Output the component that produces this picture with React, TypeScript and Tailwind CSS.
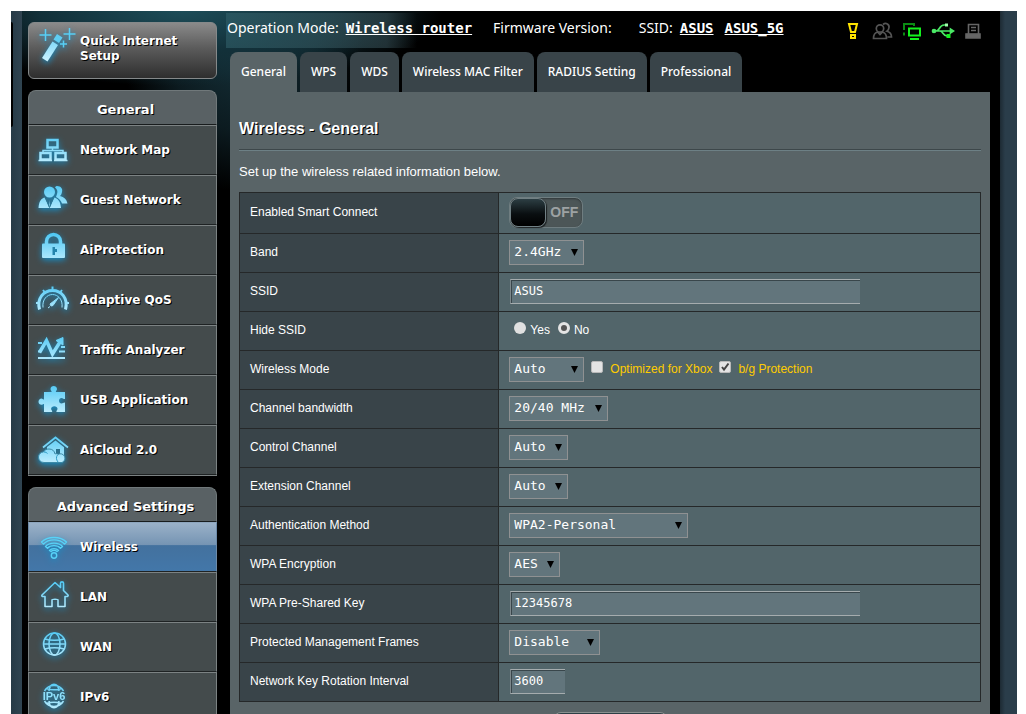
import { ReactNode, useState } from "react";

const glow = "shrink-0 overflow-visible drop-shadow-[0_2px_3px_#1690c8] [text-shadow:none]";

function IconDefs() {
  return (
    <svg className="absolute h-0 w-0" aria-hidden="true">
      <defs>
        <linearGradient id="ice" x1="0" y1="0" x2="0" y2="32" gradientUnits="userSpaceOnUse">
          <stop offset="0" stopColor="#4fc8f4" />
          <stop offset="1" stopColor="#c9f1ff" />
        </linearGradient>
      </defs>
    </svg>
  );
}

function MenuIcon({ children }: { children: ReactNode }) {
  return (
    <svg width="32" height="32" viewBox="0 0 32 32" fill="none" className={glow} aria-hidden="true">
      {children}
    </svg>
  );
}

const icons: Record<string, ReactNode> = {
  map: (
    <g stroke="url(#ice)" strokeWidth="2.500">
      <path d="M10.500 6h10v7.500h-10z M3.500 19h10v6.500h-10z M18.500 19h10v6.500h-10z" />
      <path d="M15.500 14v3 M6 18v-1.500h20V18" strokeWidth="1.500" />
      <path d="M1.500 26.500h13.500 M17 26.500h13.500" strokeWidth="1.500" />
    </g>
  ),
  guest: (
    <g>
      <g fill="url(#ice)">
        <path d="M20 2c4 0 6 3 5 6-.4 2-1 3-2 4 4 1 6.500 3 7.500 7.500H25c-1-3-3-5-6-6.500l1-3c1-3 0-5-2-6.500.6-1 1.200-1.500 2-1.500z" />
        <circle cx="12.500" cy="8" r="5.500" />
        <path d="M7.500 13.500l4.500 9.500.5-7 .5 7 4.500-9.500c3.500 1 6 4 6.500 10.500H1.500c.5-6.500 2.500-9.500 6-10.500z" />
      </g>
      <path d="M9 14.500l3.500 9 3.500-9" stroke="#2b7795" />
    </g>
  ),
  lock: (
    <g>
      <path d="M9.500 11V7.500a7 7 0 0 1 14 0V11" stroke="url(#ice)" strokeWidth="3.500" />
      <path d="M6 9.500h21a1 1 0 0 1 1 1V23a1 1 0 0 1-1 1H6a1 1 0 0 1-1-1V10.500a1 1 0 0 1 1-1z" fill="url(#ice)" />
      <path d="M15.500 13h2.500v2h2v3h-2v3h-2.500z" fill="#2484ac" />
    </g>
  ),
  gauge: (
    <g stroke="url(#ice)">
      <path d="M2.500 25.500C-.5 14 7 6.500 15.500 6.500S31.500 14 28.500 25.500" strokeWidth="3" />
      <path d="M6 23.500c-1-8 4-13 9.500-13s10.500 5 9.500 13" strokeWidth="1" />
      <path d="M15.500 2.500v3 M6 6l2 2.500 M25 6l-2 2.500 M-1 19h2.500 M32 19h-2.500" strokeWidth="2" />
      <path d="M21.500 13.500L13 20l1 2 2-.5z M13 22.500l-2 1.500" fill="url(#ice)" strokeWidth="1" />
    </g>
  ),
  traffic: (
    <g stroke="url(#ice)">
      <path d="M1 9h4 M24 13h4 M1 17.500h3 M22 17.500h6 M1 24h27" strokeWidth="2" />
      <path d="M2.500 18.500L9.500 6.500l6 13.500L23 8" strokeWidth="3.500" />
      <path d="M19 6.500L26 3.500v7.500z" fill="url(#ice)" />
    </g>
  ),
  puzzle: (
    <path
      fill="url(#ice)"
      d="M7 8h7.500c.6-1-1-1.500-1-3 0-2 1.500-3 3.200-3s3.300 1 3.300 3c0 1.500-1.600 2-1 3H28v7c-1.500.5-2-1-3.500-1s-2.500 1.200-2.500 2.800 1 2.700 2.500 2.700 2-1.200 3.500-.8V28h-8.500c-.6-1 1-1.700 1-3.200s-1.500-2.600-3.200-2.600-3.200 1.100-3.200 2.600 1.600 2.200 1 3.200H7v-8c-1-.5-1.500.8-2.500.8-1.600 0-3-1.300-3-3s1.400-3.200 3-3.200c1 0 1.500 1.300 2.500.8z"
    />
  ),
  cloud: (
    <g>
      <path d="M6 13.500L18.500 3.500 31 13.500" stroke="url(#ice)" strokeWidth="1.800" />
      <path d="M18.500 6.500l8.500 6.800V22H10v-9z" fill="url(#ice)" />
      <path d="M19 15h4v5h-4z" fill="#29708c" />
      <path
        d="M7 28.500c-3.500 0-5.500-2.500-5.500-5.500s2.500-5 5-5c1-2 3-3 5.500-3 3.500 0 5.500 2 6 5 1-.5 2-.5 3 .5a4.500 4.500 0 1 1 4 8z"
        fill="url(#ice)"
        stroke="#3b8aa8"
        strokeWidth="1"
      />
      <path d="M20.500 21c-1.500 2-1.500 4.500.5 7 M7 18c1.500 0 2.500.5 3.500 1.500" stroke="#2f9cc5" />
    </g>
  ),
  wireless: (
    <g stroke="#58d2f7" strokeWidth="1.400" strokeLinejoin="round">
      <path d="M4.500 11c6-6 19-6 25 0l-2 2c-5-5.500-16-5.500-21 0z" />
      <path d="M8.500 15.500c4-4.500 13-4.500 17 0l-2 1.700c-3-3.500-10-3.500-13 0z" />
      <path d="M12.500 19.500c2-2.500 7-2.500 9 0l-1.500 1c-1.500-1.500-4.500-1.500-6 0z" />
      <circle cx="17" cy="24.500" r="2.700" />
    </g>
  ),
  lan: (
    <path
      stroke="url(#ice)"
      strokeWidth="1.600"
      strokeLinejoin="round"
      d="M5 14L18 1.500l5.500 5V2c0-1.500 3-1.500 3 0v7.500L31 14c.5 1-.5 1.500-1.500 1.500H28V25.500h-7V19c0-1-6-1-6 0v6.500H8v-10H6.500C5 15.500 4.500 15 5 14z"
    />
  ),
  wan: (
    <g stroke="url(#ice)" strokeWidth="1.500">
      <circle cx="17.500" cy="13" r="11" />
      <ellipse cx="17.500" cy="13" rx="5.500" ry="11" />
      <path d="M8 8c5 1.800 14 1.800 19 0 M8 18c5-1.800 14-1.800 19 0 M6.500 13h22" />
    </g>
  ),
  ipv6: (
    <g stroke="url(#ice)" strokeWidth="1.500">
      <path d="M7.500 10a11 11 0 0 1 19 0 M7.500 20a11 11 0 0 0 19 0 M12 10c1-9 9-9 10 0 M12 20c1 9 9 9 10 0 M9 7.500c5 1.500 11 1.500 16 0 M9 22.500c5-1.500 11-1.500 16 0" />
      <text x="17" y="19" fontSize="11" textAnchor="middle" fill="#8fe0fb" stroke="none" className="font-['Liberation_Sans',sans-serif] font-bold">
        IPv6
      </text>
    </g>
  ),
};

const generalMenu = [
  { label: "Network Map", icon: "map" },
  { label: "Guest Network", icon: "guest" },
  { label: "AiProtection", icon: "lock" },
  { label: "Adaptive QoS", icon: "gauge" },
  { label: "Traffic Analyzer", icon: "traffic" },
  { label: "USB Application", icon: "puzzle" },
  { label: "AiCloud 2.0", icon: "cloud" },
];

const advancedMenu = [
  { label: "Wireless", icon: "wireless", active: true },
  { label: "LAN", icon: "lan" },
  { label: "WAN", icon: "wan" },
  { label: "IPv6", icon: "ipv6" },
];

const tabs = ["General", "WPS", "WDS", "Wireless MAC Filter", "RADIUS Setting", "Professional"];

type MenuEntry = { label: string; icon: string; active?: boolean };

function MenuGroup({ title, items }: { title: string; items: MenuEntry[] }) {
  return (
    <nav aria-label={title} className="border-b border-[#7c8283]">
      <h2 className="flex h-[35px] items-center justify-center rounded-t-lg border border-b-[#181c1d] border-[#70787a] bg-[#596164] pt-1 pl-[6px] text-[13px] font-bold [text-shadow:1px_1px_0_#000]">
        {title}
      </h2>
      {items.map((item) => (
        <a
          key={item.label}
          href="#"
          className={`flex h-[50px] items-center gap-[11px] border border-b-[#1e2223] pl-2 text-[12px] font-bold [text-shadow:1px_1px_0_#000] ${
            item.active
              ? "border-x-[#6d8aa8] border-t-[#8da5bd] bg-[linear-gradient(#9ab1c8_0%,#7594b3_46%,#43719e_47%,#4377a9_100%)]"
              : "border-x-[#7c8283] border-t-[#7c8283] bg-[#444b4c]"
          }`}
        >
          <MenuIcon>{icons[item.icon]}</MenuIcon>
          {item.label}
        </a>
      ))}
    </nav>
  );
}

function Sidebar() {
  return (
    <aside className="w-[189px] shrink-0 pt-[11px] font-['DejaVu_Sans',Verdana,sans-serif] text-white">
      <button
        type="button"
        className="mb-[11px] flex h-[57px] w-full items-start gap-[5px] rounded-md border border-[#85898a] bg-[linear-gradient(#8a8a8a,#5c5c5c_45%,#2e2e2e)] pt-[5px] pl-[10px] text-left"
      >
        <svg width="36" height="38" viewBox="0 0 36 38" fill="none" className={glow} aria-hidden="true">
          <path d="M6.500 1v12 M.5 7h12 M30.500 0v12 M24.500 6h12 M24.500 12.500v7 M21 16h7" stroke="#58cff5" strokeWidth="1.500" />
          <path d="M13.500 13.500l5.500 3.500L8.500 33.500 3 30z" fill="url(#ice)" />
          <path d="M18 6l5.500 3.500-3.500 5.500-5.500-3.500z" fill="#5fcdf2" />
        </svg>
        <span className="pt-[6px] text-[12px] leading-[15px] font-bold [text-shadow:1px_1px_0_#000]">
          Quick Internet
          <br />
          Setup
        </span>
      </button>
      <div className="flex flex-col gap-[11px]">
        <MenuGroup title="General" items={generalMenu} />
        <MenuGroup title="Advanced Settings" items={advancedMenu} />
      </div>
    </aside>
  );
}

function StatusIcons() {
  return (
    <div className="ml-auto flex items-center gap-[9px] pr-2">
      <svg width="20" height="20" viewBox="0 0 20 20" fill="none" stroke="#ffe400" strokeWidth="2" aria-label="Notice">
        <path d="M6 3h8l-2 8H8z M8 14h4v3H8z" />
      </svg>
      <svg width="21" height="20" viewBox="0 0 21 20" fill="none" stroke="#555" strokeWidth="1.700" aria-label="Guests">
        <circle cx="8" cy="7.500" r="3.700" />
        <path d="M1.500 17.500c0-4 2-6 4-6.500l2.500 2.500 2.500-2.500c2 .5 4 2.500 4 6.500z M11 3.500c3-2.500 6.500 0 6 3-.2 2-1 3-2 3.700 3 .8 4.500 3 4.500 5.800h-4" />
      </svg>
      <svg width="20" height="20" viewBox="0 0 20 20" fill="none" strokeWidth="2" aria-label="Clients">
        <path d="M2 9V3h10v2 M2 11.500v3" stroke="#0b8d13" />
        <path d="M7 7.500h11v7H7z M8 18h9" stroke="#14f01e" />
      </svg>
      <svg width="24" height="20" viewBox="0 0 24 20" fill="none" stroke="#4be866" strokeWidth="1.700" aria-label="USB">
        <path d="M2 10h18 M5 10c4 0 3-6 8-6h2 M9 10c3 0 3 5 7 5" />
        <circle cx="3" cy="10" r="1.500" fill="#4be866" />
        <path d="M19.500 8v4l3-2z" fill="#4be866" />
        <path d="M14 2.500h3v3h-3z" fill="#9effab" stroke="none" />
        <path d="M15.500 13h4v4h-4z" fill="#17f022" stroke="none" />
      </svg>
      <svg width="18" height="20" viewBox="0 0 18 20" fill="none" stroke="#666" strokeWidth="1.600" aria-label="Printer">
        <path d="M4.500 13V3.500h10V13 M7 6.500h5 M7 9.500h5 M2 13.500h14" />
        <path d="M2 13h14v4H2z" fill="#666" />
      </svg>
    </div>
  );
}

function Dropdown({ id, options, width }: { id: string; options: string[]; width: string }) {
  return (
    <span className={`relative inline-flex ${width}`}>
      <select
        id={id}
        className="h-[25px] w-full appearance-none border border-[#8f9192] bg-[#62757c] pl-1 font-['DejaVu_Sans_Mono',monospace] text-[13px] leading-[16px] text-white"
      >
        {options.map((option) => (
          <option key={option}>{option}</option>
        ))}
      </select>
      <svg width="7" height="7" viewBox="0 0 7 7" className="pointer-events-none absolute top-[9px] right-[6px]" aria-hidden="true">
        <path d="M0 0h7L3.500 7z" fill="#000" />
      </svg>
    </span>
  );
}

function TextField({ id, value, width }: { id: string; value: string; width: string }) {
  return (
    <input
      id={id}
      type="text"
      defaultValue={value}
      className={`ml-[1px] h-[25px] border-y border-l border-y-[#a5acae] border-l-[#7c878b] bg-[#62757c] px-[3px] font-['DejaVu_Sans_Mono',monospace] text-[12px] text-white shadow-[inset_1px_1px_0_#39464b] ${width}`}
    />
  );
}

function CheckOption({ label, checked }: { label: string; checked?: boolean }) {
  return (
    <label className="flex items-center gap-[7px] text-[#ffcc00]">
      <span className="relative mb-[5px] flex">
        <input
          type="checkbox"
          defaultChecked={checked}
          className="peer h-3 w-3 appearance-none rounded-[2px] border border-[#b9b9b9] bg-[#e4e4e4]"
        />
        <svg viewBox="0 0 12 12" fill="none" className="pointer-events-none absolute inset-0 hidden h-3 w-3 peer-checked:block" aria-hidden="true">
          <path d="M3 6l2 2.500 4.500-6" stroke="#444" strokeWidth="2" />
        </svg>
      </span>
      {label}
    </label>
  );
}

function SmartConnectSwitch() {
  const [on, setOn] = useState(false);
  return (
    <button
      id="smart-connect"
      type="button"
      role="switch"
      aria-checked={on}
      onClick={() => setOn(!on)}
      className={`flex h-[31px] w-[74px] items-center rounded-lg border border-[#6f7d80] bg-[#4c5657] text-[14px] font-bold text-[#9da2a3] shadow-[inset_0_1px_2px_#30383a] ${
        on ? "flex-row-reverse" : ""
      }`}
    >
      <span className="h-[29px] w-[36px] shrink-0 rounded-lg border border-[#718084] bg-[linear-gradient(#2c3e43,#0a0f11_55%,#000)] shadow-[1px_1px_1px_#1b2021]" />
      <span className="flex-1 text-center">{on ? "ON" : "OFF"}</span>
    </button>
  );
}

const rows: { label: string; id?: string; control: ReactNode }[] = [
  { label: "Enabled Smart Connect", id: "smart-connect", control: <SmartConnectSwitch /> },
  { label: "Band", id: "band", control: <Dropdown id="band" options={["2.4GHz", "5GHz"]} width="w-[75px]" /> },
  { label: "SSID", id: "ssid", control: <TextField id="ssid" value="ASUS" width="w-[350px]" /> },
  {
    label: "Hide SSID",
    control: (
      <div role="radiogroup" aria-label="Hide SSID" className="flex items-center gap-2 pl-[5px]">
        {["Yes", "No"].map((choice) => (
          <label key={choice} className="flex items-center gap-1">
            <input
              type="radio"
              name="hide-ssid"
              defaultChecked={choice === "No"}
              className="mb-[4px] h-3 w-3 appearance-none rounded-full bg-[#e0e0e0] checked:border-[3px] checked:border-[#e4e4e4] checked:bg-[#555]"
            />
            {choice}
          </label>
        ))}
      </div>
    ),
  },
  {
    label: "Wireless Mode",
    id: "mode",
    control: (
      <div className="flex items-center gap-[7px]">
        <Dropdown id="mode" options={["Auto", "N only", "Legacy"]} width="w-[75px]" />
        <CheckOption label="Optimized for Xbox" />
        <CheckOption label="b/g Protection" checked />
      </div>
    ),
  },
  { label: "Channel bandwidth", id: "bandwidth", control: <Dropdown id="bandwidth" options={["20/40 MHz", "20 MHz", "40 MHz"]} width="w-[99px]" /> },
  { label: "Control Channel", id: "control-channel", control: <Dropdown id="control-channel" options={["Auto", "1", "6", "11"]} width="w-[59px]" /> },
  { label: "Extension Channel", id: "ext-channel", control: <Dropdown id="ext-channel" options={["Auto"]} width="w-[59px]" /> },
  { label: "Authentication Method", id: "auth", control: <Dropdown id="auth" options={["WPA2-Personal", "Open System"]} width="w-[179px]" /> },
  { label: "WPA Encryption", id: "encryption", control: <Dropdown id="encryption" options={["AES"]} width="w-[51px]" /> },
  { label: "WPA Pre-Shared Key", id: "psk", control: <TextField id="psk" value="12345678" width="w-[350px]" /> },
  { label: "Protected Management Frames", id: "pmf", control: <Dropdown id="pmf" options={["Disable", "Capable", "Required"]} width="w-[91px]" /> },
  { label: "Network Key Rotation Interval", id: "rotation", control: <TextField id="rotation" value="3600" width="w-[55px]" /> },
];

function WirelessPanel() {
  return (
    <section className="flex-1 bg-[#596467] px-[9px] pt-[27px] font-['Liberation_Sans',Arial,sans-serif] text-white">
      <h1 className="text-[16px] leading-[20px] font-bold [text-shadow:1px_1px_0_#000]">Wireless - General</h1>
      <hr className="mt-[10px] h-[2px] border-t border-b border-t-[#3d474a] border-b-[#6d8085]" />
      <p className="py-3 text-[13px] leading-[17px]">Set up the wireless related information below.</p>
      <table className="w-full border-collapse text-[12px]">
        <tbody>
          {rows.map((row) => (
            <tr key={row.label} className="h-[39px] first:h-[41px]">
              <th scope="row" className="w-[35%] border border-[#252829] bg-[#394449] pb-[2px] pl-[10px] text-left font-normal">
                {row.id ? <label htmlFor={row.id}>{row.label}</label> : row.label}
              </th>
              <td className="border border-[#252829] bg-[#52656a] pb-[2px] pl-[10px]">
                <div className="flex items-center">{row.control}</div>
              </td>
            </tr>
          ))}
        </tbody>
      </table>
      <div className="flex justify-center py-[10px]">
        <button type="button" className="h-[33px] w-[115px] rounded-lg border border-[#89908f] bg-[linear-gradient(#2d4047,#0c1214)] text-[12px] font-bold">
          Apply
        </button>
      </div>
    </section>
  );
}

function StatusLink({ children }: { children: ReactNode }) {
  return (
    <a href="#" className="font-['DejaVu_Sans_Mono',monospace] text-[14px] font-bold underline">
      {children}
    </a>
  );
}

function Main() {
  return (
    <main className="flex min-w-0 flex-1 flex-col text-white">
      <header className="mt-[2px] -ml-1 flex h-[35px] shrink-0 items-center bg-[linear-gradient(90deg,#31606a99,#3a535a88_21%,transparent_25%)] pl-px font-['Noto_Sans',Tahoma,sans-serif] text-[14px] whitespace-nowrap">
        <div className="flex items-baseline gap-[7px] pb-[6px]">
          <span>Operation Mode:</span>
          <StatusLink>Wireless router</StatusLink>
          <span className="px-[14px]">Firmware Version:</span>
          <span className="pl-[6px]">SSID:</span>
          <StatusLink>ASUS</StatusLink>
          <span className="pl-1">
            <StatusLink>ASUS_5G</StatusLink>
          </span>
        </div>
        <StatusIcons />
      </header>
      <nav aria-label="Wireless settings" className="mt-1 flex shrink-0 gap-[3px] font-['Noto_Sans',Tahoma,sans-serif] text-[12px] font-medium whitespace-nowrap">
        {tabs.map((tab) => (
          <a
            key={tab}
            href="#"
            className={`flex h-10 items-center rounded-t-lg px-[11px] ${tab === "General" ? "bg-[#596467]" : "bg-[#394449]"}`}
          >
            {tab}
          </a>
        ))}
      </nav>
      <WirelessPanel />
    </main>
  );
}

export default function App() {
  return (
    <div className="flex h-screen overflow-hidden bg-white pt-[11px] pr-[9px] pl-[11px]">
      <IconDefs />
      <div className="w-[11px] shrink-0 bg-[linear-gradient(90deg,#263a46,#304451)] pt-[11px]">
        <div className="h-[105px] w-[2px] rounded-r-sm bg-black" />
      </div>
      <div className="flex min-w-0 flex-1 gap-[13px] bg-black bg-[radial-gradient(ellipse_260px_75px_at_160px_0px,#1d4c58_0%,#123039_55%,transparent_100%),radial-gradient(ellipse_120px_150px_at_220px_30px,#16323b_0%,#0c1b20_60%,transparent_100%)] bg-no-repeat pr-[10px] pl-[6px]">
        <Sidebar />
        <Main />
      </div>
      <div className="w-[17px] shrink-0 bg-[linear-gradient(90deg,#1d2a33,#2a3d4a_30%)]" />
    </div>
  );
}
